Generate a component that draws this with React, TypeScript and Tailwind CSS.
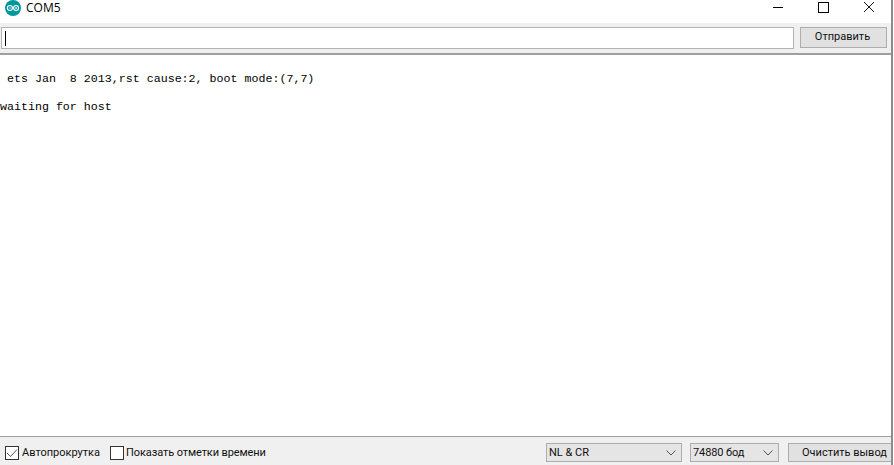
const ui = { fontFamily: 'Roboto, "Noto Sans", sans-serif' };

function ArduinoLogo() {
  return (
    <svg width="16" height="16" viewBox="0 0 16 16" className="shrink-0">
      <circle cx="8" cy="8" r="8" fill="#00979c" />
      <circle cx="4.9" cy="8" r="2.5" fill="none" stroke="#fff" strokeWidth="1.1" />
      <circle cx="11.1" cy="8" r="2.5" fill="none" stroke="#fff" strokeWidth="1.1" />
      <path d="M3.9 8h2M10.1 8h2M11.1 7v2" stroke="#fff" strokeWidth="0.8" />
    </svg>
  );
}

function Chevron() {
  return (
    <svg width="10" height="6" viewBox="0 0 10 6" className="shrink-0">
      <path d="M0.5 0.5L5 5L9.5 0.5" fill="none" stroke="#555" strokeWidth="1" />
    </svg>
  );
}

function Select({ label, className }: { label: string; className: string }) {
  return (
    <div className={`flex h-[19px] items-center justify-between border border-[#adadad] bg-[#e5e5e5] pl-[2px] pr-[5px] text-[#111] ${className}`}>
      <span className="pt-px">{label}</span>
      <Chevron />
    </div>
  );
}

export default function App() {
  return (
    <div className="h-[465px] w-[894px] overflow-hidden bg-white">
      <div className="flex h-[465px] w-[893px] flex-col border-r-[2px] border-[#8c8c8c] bg-white text-black" style={ui}>
        {/* Title bar */}
        <div className="flex h-[23px] shrink-0 items-start justify-between">
          <div className="flex items-center gap-[5px] pl-[5px]">
            <ArduinoLogo />
            <span className="text-[12px] leading-[16px]" style={{ fontFamily: '"Open Sans", sans-serif' }}>COM5</span>
          </div>
          <div className="flex items-start pr-[17px] pt-[2px]">
            <div className="mr-[35px] mt-[5px] h-px w-[10px] bg-black" />
            <div className="mr-[35px] h-[11px] w-[11px] border border-black" />
            <svg width="10" height="10" viewBox="0 0 10 10">
              <path d="M0 0L10 10M10 0L0 10" stroke="#111" strokeWidth="1" />
            </svg>
          </div>
        </div>

        {/* Send row */}
        <div className="flex h-[32px] shrink-0 items-start gap-[6px] border-b-[2px] border-[#9f9fa2] bg-[#f0f0f0] pl-px pr-[4px] pt-[4px]">
          <div className="flex h-[22px] flex-1 items-center border border-[#b4b4b4] bg-white pl-[3px]">
            <div className="h-[15px] w-px bg-black" />
          </div>
          <div className="flex h-[21px] w-[87px] items-center justify-center border border-[#adadad] bg-[#e1e1e1] pr-[2px] text-[11px] text-[#111]">
            Отправить
          </div>
        </div>

        {/* Monitor output */}
        <div className="flex-1 whitespace-pre pt-[17px] text-[11.65px] leading-[14px]" style={{ fontFamily: '"Liberation Mono", monospace' }}>
          <p> ets Jan  8 2013,rst cause:2, boot mode:(7,7)</p>
          <p className="mt-[14px]">waiting for host</p>
        </div>

        {/* Bottom bar */}
        <div className="flex h-[29px] shrink-0 items-start border-t border-[#9f9fa2] bg-[#f0f0f0] pl-[5px] pt-[6px] text-[11px] text-[#111]">
          <div className="flex h-[19px] items-center gap-[3px]">
            <div className="flex h-[14px] w-[14px] items-center justify-center border border-[#333] bg-white">
              <svg width="12" height="10" viewBox="0 0 12 10">
                <path d="M1 5L4.5 8.5L11 1.5" fill="none" stroke="#555" strokeWidth="1" />
              </svg>
            </div>
            <span className="pt-px">Автопрокрутка</span>
          </div>
          <div className="ml-[10px] flex h-[19px] items-center gap-[2px]">
            <div className="h-[14px] w-[14px] border border-[#333] bg-white" />
            <span className="pt-px tracking-[-0.1px]">Показать отметки времени</span>
          </div>
          <Select label="NL & CR" className="ml-auto w-[136px]" />
          <Select label="74880 бод" className="ml-[8px] w-[89px] tracking-[-0.1px]" />
          <div className="ml-[9px] flex h-[19px] w-[103px] items-center border-y border-l border-[#adadad] bg-[#e1e1e1] pl-[13px] pt-px">
            Очистить вывод
          </div>
        </div>
      </div>
    </div>
  );
}
